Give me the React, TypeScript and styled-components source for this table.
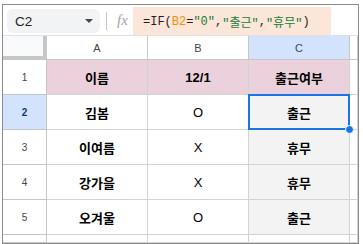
import React from "react";
import styled, { createGlobalStyle, css } from "styled-components";

const GlobalStyle = createGlobalStyle`
  html, body {
    margin: 0;
    background: #ffffff;
  }
  body {
    padding: 4px 0 0 2px;
    font-family: "Liberation Sans", "Noto Sans CJK KR", Arial, sans-serif;
  }
`;

type Row = { num: number; name: string; day: string; state: string };

const rows: Row[] = [
  { num: 2, name: "김봄", day: "O", state: "출근" },
  { num: 3, name: "이여름", day: "X", state: "휴무" },
  { num: 4, name: "강가을", day: "X", state: "휴무" },
  { num: 5, name: "오겨울", day: "O", state: "출근" },
];

export default function App() {
  return (
    <>
      <GlobalStyle />
      <Frame>
        <Toolbar>
          <NameBox>
            <span>C2</span>
            <Caret />
          </NameBox>
          <Divider />
          <Fx>fx</Fx>
          <Formula>
            =IF(<Ref>B2</Ref>=<Str>"0"</Str>,<Str>"출근"</Str>,<Str>"휴무"</Str>)
          </Formula>
        </Toolbar>
        <Grid>
          <Corner />
          <ColHead>A</ColHead>
          <ColHead>B</ColHead>
          <ColHead $active>C</ColHead>
          <ColHead />

          <RowHead>1</RowHead>
          <Cell $title>이름</Cell>
          <Cell $title>12/1</Cell>
          <Cell $title>출근여부</Cell>
          <Cell />

          {rows.map((r) => (
            <React.Fragment key={r.num}>
              <RowHead $active={r.num === 2}>{r.num}</RowHead>
              <Cell $bold>{r.name}</Cell>
              <Cell>{r.day}</Cell>
              <Cell $result $selected={r.num === 2}>
                {r.state}
              </Cell>
              <Cell />
            </React.Fragment>
          ))}

          <RowHead />
          <Cell />
          <Cell />
          <Cell />
          <Cell />
        </Grid>
      </Frame>
    </>
  );
}

const Frame = styled.div`
  box-sizing: border-box;
  width: 357px;
  height: 240px;
  border: 1px solid #8c8c8c;
  overflow: hidden;
  background: #ffffff;
  display: flex;
  flex-direction: column;
`;

const Toolbar = styled.div`
  display: flex;
  align-items: center;
  height: 30px;
  padding-left: 4px;
  flex-shrink: 0;
`;

const NameBox = styled.div`
  box-sizing: border-box;
  display: flex;
  align-items: center;
  justify-content: space-between;
  width: 93px;
  height: 24px;
  margin-top: 2px;
  padding: 0 7px 0 8px;
  border-radius: 6px;
  background: #f1f3f4;
  font-size: 13.5px;
  color: #1f1f1f;
`;

const Caret = styled.i`
  width: 0;
  height: 0;
  border-left: 4px solid transparent;
  border-right: 4px solid transparent;
  border-top: 4px solid #444746;
`;

const Divider = styled.div`
  width: 1px;
  height: 18px;
  margin: 2px 0 0 6px;
  background: #c4c7c5;
`;

const Fx = styled.span`
  margin: 1px 0 0 10px;
  width: 16px;
  font-family: "Liberation Serif", serif;
  font-style: italic;
  font-size: 15px;
  color: #a0a4a8;
`;

const Formula = styled.div`
  box-sizing: border-box;
  align-self: stretch;
  display: flex;
  align-items: center;
  width: 198px;
  margin-top: 2px;
  padding: 1px 0 0 10px;
  background: #fce5d9;
  font-family: "Liberation Mono", "Noto Sans CJK KR", monospace;
  font-size: 12px;
  color: #1f1f1f;
  white-space: pre;
`;

const Ref = styled.span`
  color: #f09300;
`;

const Str = styled.span`
  color: #188038;
`;

const Grid = styled.div`
  display: grid;
  grid-template-columns: 44px 101px 101px 101px 1fr;
  grid-template-rows: 24px repeat(5, 35px) 1fr;
  flex: 1;
  border-top: 1px solid #e0e0e0;
`;

const Corner = styled.div`
  background: #f8f9fa;
  border-right: 4px solid #c4c7c5;
  border-bottom: 4px solid #c4c7c5;
`;

const headBase = css`
  box-sizing: border-box;
  display: flex;
  align-items: center;
  justify-content: center;
  color: #444746;
`;

const ColHead = styled.div<{ $active?: boolean }>`
  ${headBase};
  font-size: 11px;
  background: ${(p) => (p.$active ? "#d3e3fd" : "#ffffff")};
  border-right: 1px solid #c4c7c5;
  border-bottom: 1px solid #c4c7c5;
`;

const RowHead = styled.div<{ $active?: boolean }>`
  ${headBase};
  font-size: 10px;
  font-weight: ${(p) => (p.$active ? 700 : 400)};
  color: ${(p) => (p.$active ? "#0b3a80" : "#444746")};
  background: ${(p) => (p.$active ? "#d3e3fd" : "#ffffff")};
  border-right: 1px solid #c4c7c5;
  border-bottom: 1px solid #c4c7c5;
`;

const Cell = styled.div<{
  $title?: boolean;
  $bold?: boolean;
  $result?: boolean;
  $selected?: boolean;
}>`
  position: relative;
  box-sizing: border-box;
  display: flex;
  align-items: center;
  justify-content: center;
  font-size: 13px;
  color: #000000;
  border-right: 1px solid #d3d3d3;
  border-bottom: 1px solid #d3d3d3;
  background: ${(p) =>
    p.$title ? "#ead1dc" : p.$result ? "#f3f3f3" : "#ffffff"};
  font-weight: ${(p) => (p.$title || p.$bold || p.$result ? 700 : 400)};
  ${(p) =>
    p.$selected &&
    css`
      z-index: 2;
      &::before {
        content: "";
        position: absolute;
        top: -1px;
        left: -1px;
        right: -1px;
        bottom: -1px;
        border: 2px solid #1a73e8;
      }
      &::after {
        content: "";
        position: absolute;
        right: -5px;
        bottom: -5px;
        width: 7px;
        height: 7px;
        border-radius: 50%;
        background: #1a73e8;
        border: 1px solid #ffffff;
      }
    `}
`;
